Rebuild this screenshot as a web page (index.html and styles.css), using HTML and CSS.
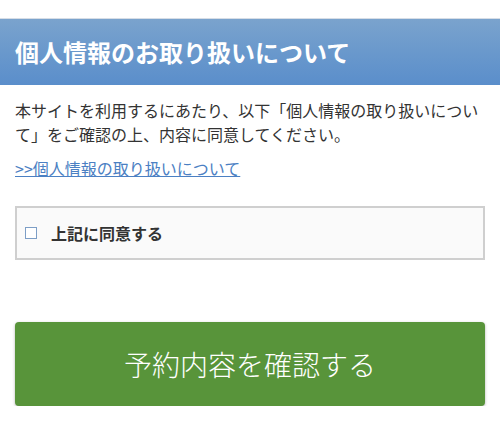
FILE: index.html
```html
<!DOCTYPE html>
<html lang="ja">
<head>
  <meta charset="UTF-8">
  <meta name="viewport" content="width=device-width, initial-scale=1.0">
  <title>個人情報のお取り扱いについて</title>
  <link rel="stylesheet" href="styles.css">
</head>
<body>
  <div class="page">
    <h2 class="section-title">個人情報のお取り扱いについて</h2>

    <div class="content">
      <p class="lead">本サイトを利用するにあたり、以下「個人情報の取り扱いについて」をご確認の上、内容に同意してください。</p>
      <a class="policy-link" href="#">&gt;&gt;個人情報の取り扱いについて</a>

      <label class="agree-box">
        <span class="check"></span>
        <span class="agree-text">上記に同意する</span>
      </label>

      <button class="submit" type="button">予約内容を確認する</button>
    </div>
  </div>
</body>
</html>
```

FILE: styles.css
```css
body {
  margin: 0;
  background-color: #fff;
  font-family: "Noto Sans CJK JP", "Noto Sans", sans-serif;
  color: #333;
}
.page {
  padding-top: 18px;
}
.section-title {
  margin: 0;
  height: 67px;
  box-sizing: border-box;
  padding: 0 15px;
  display: flex;
  align-items: center;
  border-top: 1px solid #d6dde6;
  background: linear-gradient(to bottom, #7aa3cd, #5a8ecb);
  color: #fff;
  font-size: 24px;
  font-weight: bold;
  line-height: 1;
}
.content {
  padding: 13px 15px 0;
}
.lead {
  margin: 0;
  font-size: 16px;
  line-height: 24px;
  color: #333;
}
.policy-link {
  display: inline-block;
  margin-top: 10px;
  font-size: 16px;
  line-height: 24px;
  color: #4b80c3;
  text-decoration: underline;
}
.agree-box {
  display: flex;
  align-items: center;
  margin-top: 26px;
  height: 54px;
  box-sizing: border-box;
  padding: 0 8px;
  border: 2px solid #cfcfcf;
  background-color: #fafafa;
}
.check {
  width: 10px;
  height: 10px;
  border: 1px solid #7d9ec6;
  background-color: #fff;
  margin-right: 14px;
}
.agree-text {
  font-size: 16px;
  font-weight: bold;
  color: #333;
}
.submit {
  display: block;
  width: 100%;
  margin-top: 62px;
  height: 84px;
  border: none;
  border-radius: 4px;
  background-color: #58943a;
  box-shadow: 0 1px 3px rgba(0,0,0,0.3);
  color: #fff;
  font-family: inherit;
  font-size: 28px;
  font-weight: 300;
  cursor: pointer;
}
```
